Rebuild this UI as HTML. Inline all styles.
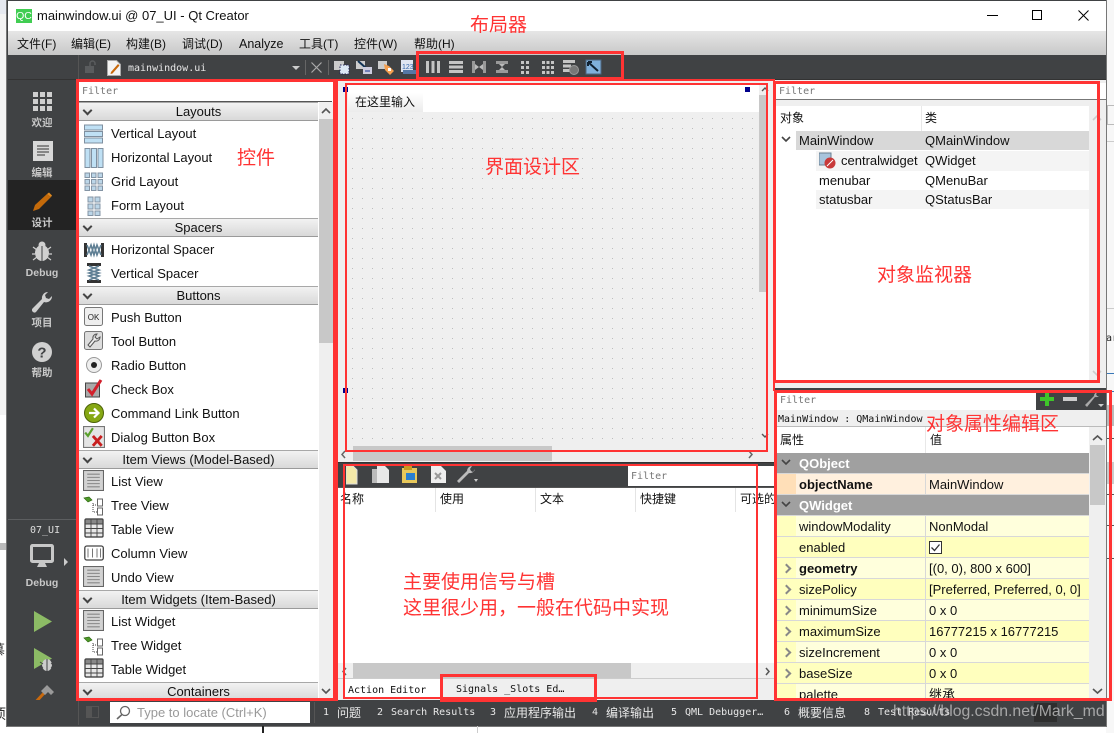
<!DOCTYPE html>
<html lang="zh"><head><meta charset="utf-8"><title>Qt Creator</title>
<style>
html,body{margin:0;padding:0;width:1114px;height:733px;overflow:hidden;background:#fff}
body{position:relative;font-family:"Liberation Sans","Noto Sans CJK SC",sans-serif;font-size:13px;color:#111}
div,span,svg{position:absolute}
span{white-space:nowrap}
.m{font-family:"DejaVu Sans Mono","Liberation Mono","Noto Sans CJK SC",monospace;font-size:10px;margin-top:2px}
.h{left:79px;width:239px;height:17px;line-height:17px;text-align:center;background:linear-gradient(#f2f2f2,#d9d9d9);border-top:1px solid #a8a8a8;border-bottom:1px solid #9a9a9a;font-size:13px}
.h:before{content:"";position:absolute;left:5px;top:4px;width:5px;height:5px;border:solid #444;border-width:0 2px 2px 0;transform:rotate(45deg)}
.i{left:111px;height:24px;line-height:24px;margin-top:1px}
.ic{left:84px;width:20px;height:20px}
.r{border:0 solid #ff3333}
.a{color:#f33;font-size:19px;line-height:24px;white-space:nowrap;font-family:"Noto Sans CJK SC",sans-serif}
.s{color:#c8c8c8;font-size:10.500px;font-weight:bold;text-align:center;left:8px;width:68px;line-height:14px;white-space:nowrap;margin-top:1px}
.p{left:777px;width:312px;height:20px;border-bottom:1px solid #d8d8d8;line-height:20px}
.p b,.p i,.p u{position:absolute;font-style:normal;text-decoration:none;white-space:nowrap;top:1px}
.p i{left:22px;font-size:13px}.p u{left:152px;font-size:13px}
.p em{position:absolute;left:0;top:0;width:19px;height:20px}
.p:after{content:"";position:absolute;left:148px;top:0;width:1px;height:20px;background:#d8d8d8}
.g{background:#a0a0a0;color:#fff;font-weight:bold}
.g:after{display:none}
.l{background:#ffffdc}.l em{background:#ffffbe}
.d{background:#ffffbe}.d em{background:#ffffbe}
.ar:before{content:"";position:absolute;left:6px;top:7px;width:5px;height:5px;border:solid #888;border-width:2px 2px 0 0;transform:rotate(45deg);z-index:1}
.tb{width:18px;height:18px;top:58px}
</style></head><body>

<svg style="display:none" width="0" height="0">
<symbol id="vl" viewBox="0 0 20 20"><g fill="#bfe0f4" stroke="#7f8f9f"><rect x=".5" y="1" width="18" height="5"/><rect x=".5" y="7.5" width="18" height="5"/><rect x=".5" y="14" width="18" height="5"/></g></symbol>
<symbol id="hl" viewBox="0 0 20 20"><g fill="#bfe0f4" stroke="#7f8f9f"><rect x="1" y=".5" width="5" height="19"/><rect x="7.5" y=".5" width="5" height="19"/><rect x="14" y=".5" width="5" height="19"/></g></symbol>
<symbol id="gl" viewBox="0 0 20 20"><g fill="#bcd6e8" stroke="#8494a4"><rect x="1" y="1" width="4.5" height="4.5"/><rect x="7.5" y="1" width="4.5" height="4.5"/><rect x="14" y="1" width="4.5" height="4.5"/><rect x="1" y="7.5" width="4.5" height="4.5"/><rect x="7.5" y="7.5" width="4.5" height="4.5"/><rect x="14" y="7.5" width="4.5" height="4.5"/><rect x="1" y="14" width="4.5" height="4.5"/><rect x="7.5" y="14" width="4.5" height="4.5"/><rect x="14" y="14" width="4.5" height="4.5"/></g></symbol>
<symbol id="fl" viewBox="0 0 20 20"><g fill="#bcd6e8" stroke="#8494a4"><rect x="4" y="1" width="5" height="5"/><rect x="11" y="1" width="5" height="5"/><rect x="4" y="8" width="5" height="5"/><rect x="11" y="8" width="5" height="5"/><rect x="4" y="15" width="5" height="4.5"/><rect x="11" y="15" width="5" height="4.5"/></g></symbol>
<symbol id="hs" viewBox="0 0 20 20"><rect x="0" y="3" width="3" height="14" fill="#333"/><rect x="17" y="3" width="3" height="14" fill="#333"/><path d="M3 5l4 10 3-10 3 10 4-10M3 15l4-10 3 10 3-10 4 10" fill="none" stroke="#5f7f94" stroke-width="1.6"/></symbol>
<symbol id="vs" viewBox="0 0 20 20"><rect x="3" y="0" width="14" height="3" fill="#333"/><rect x="3" y="17" width="14" height="3" fill="#333"/><path d="M5 3l10 4-10 3 10 3-10 4M15 3L5 7l10 3-10 3 10 4" fill="none" stroke="#5f7f94" stroke-width="1.6"/></symbol>
<symbol id="ok" viewBox="0 0 20 20"><rect x=".5" y=".5" width="18" height="18" rx="2" fill="#eee" stroke="#777"/><text x="9.5" y="13" font-size="8" font-family="Liberation Sans" text-anchor="middle" fill="#222">OK</text></symbol>
<symbol id="tool" viewBox="0 0 20 20"><rect x=".5" y=".5" width="18" height="18" rx="2" fill="#ddd" stroke="#777"/><path d="M13 3a4 4 0 0 0-4 5L4 14l2 2 5-6a4 4 0 0 0 5-4l-3 2-2-2z" fill="#eee" stroke="#555"/></symbol>
<symbol id="radio" viewBox="0 0 20 20"><circle cx="10" cy="10" r="7.5" fill="#eee" stroke="#999"/><circle cx="10" cy="10" r="3" fill="#222"/></symbol>
<symbol id="check" viewBox="0 0 20 20"><rect x="1.500" y="4" width="14" height="14" fill="#aaa" stroke="#444"/><path d="M4 10l4 5 9-14" fill="none" stroke="#d2202c" stroke-width="3"/></symbol>
<symbol id="cmd" viewBox="0 0 20 20"><circle cx="10" cy="10" r="9.500" fill="#86a814" stroke="#4c6208"/><path d="M5 10h9M10 5.500l4.500 4.500-4.500 4.500" fill="none" stroke="#fff" stroke-width="2.200"/></symbol>
<symbol id="dlg" viewBox="0 0 20 20"><rect x=".5" y=".5" width="19" height="19" fill="#e4e4e4" stroke="#777"/><path d="M2 6l2.500 3L9 2" fill="none" stroke="#5aa02c" stroke-width="2"/><path d="M9 9l8 9M17 9l-8 9" stroke="#c81e1e" stroke-width="2.600"/></symbol>
<symbol id="list" viewBox="0 0 20 20"><rect x=".5" y=".5" width="19" height="19" fill="#d2d2d2" stroke="#666"/><path d="M4 4h12M4 7h12M4 10h12M4 13h12M4 16h12" stroke="#888"/></symbol>
<symbol id="tree" viewBox="0 0 20 20"><path d="M0 2l5-1 3 3-4 2z" fill="#4f9a2a" stroke="#2f6a12" stroke-width=".7"/><path d="M9 7v9h4M9 9h4" stroke="#444" stroke-dasharray="1 1" fill="none"/><rect x="13.500" y="3" width="5" height="7" fill="#fff" stroke="#666"/><rect x="13.500" y="12" width="5" height="7" fill="#fff" stroke="#666"/></symbol>
<symbol id="table" viewBox="0 0 20 20"><rect x="1" y="1" width="18" height="18" rx="1" fill="#e8e8e8" stroke="#333" stroke-width="1.200"/><rect x="1.500" y="1.500" width="17" height="4" fill="#888"/><path d="M7 1v18M13 1v18M1 6h18M1 10.500h18M1 15h18" stroke="#444" stroke-width=".9"/></symbol>
<symbol id="col" viewBox="0 0 20 20"><rect x=".8" y="3" width="18.500" height="14" rx="2" fill="#fff" stroke="#444" stroke-width="1.300"/><path d="M4 5.500v9M8.500 5.500v9M13 5.500v9M16.500 5.500v9" stroke="#777"/></symbol>
</svg>

<!-- page behind -->
<div style="left:0;top:0;width:8px;height:415px;background:#f3f3f3"></div>
<div style="left:0;top:0;width:8px;height:14px;background:#e6e9f0"></div>
<div style="left:0;top:543px;width:8px;height:7px;background:#bbb"></div>
<span style="left:-9px;top:640px;font-size:14px;color:#333">慕</span>
<span style="left:-8px;top:704px;font-size:14px;color:#333">项</span>
<div style="left:1106px;top:0;width:8px;height:733px;background:#f7f7f7"></div>
<div style="left:1107px;top:105px;width:7px;height:18px;border:1px solid #bbb"></div>
<div style="left:1106px;top:141px;width:8px;height:1px;background:#ccc"></div>
<span class="m" style="left:1106px;top:331px;color:#222">ar</span>
<div style="left:1106px;top:308px;width:8px;height:1px;background:#ccc"></div>
<div style="left:1106px;top:373px;width:8px;height:1px;background:#3a78b8"></div>
<div style="left:1106px;top:391px;width:8px;height:1px;background:#3a78b8"></div>
<div style="left:1106px;top:405px;width:8px;height:21px;background:#bbb"></div>
<div style="left:1106px;top:438px;width:8px;height:1px;background:#555"></div>
<div style="left:1106px;top:462px;width:8px;height:22px;background:#ccc"></div>
<div style="left:1106px;top:494px;width:8px;height:1px;background:#555"></div>
<div style="left:1106px;top:525px;width:8px;height:1px;background:#555"></div>
<div style="left:1106px;top:558px;width:8px;height:1px;background:#555"></div>

<!-- window -->
<div style="left:7px;top:0;width:1099px;height:726px;background:#404244;box-shadow:0 0 0 1px #777"></div>
<div style="left:8px;top:1px;width:1098px;height:30px;background:#fff"></div>
<div style="left:16px;top:9px;width:16px;height:14px;background:#41cd52;color:#fff;font-size:10.500px;line-height:14px;text-align:center">QC</div>
<span style="left:37px;top:8px;line-height:16px;font-size:13px;color:#111">mainwindow.ui @ 07_UI - Qt Creator</span>
<div style="left:987px;top:15px;width:11px;height:1px;background:#000"></div>
<div style="left:1032px;top:10px;width:8px;height:8px;border:1px solid #000"></div>
<svg style="left:1078px;top:10px" width="11" height="11"><path d="M.5.5l10 10M10.500.5l-10 10" stroke="#000" fill="none"/></svg>

<div style="left:8px;top:31px;width:1098px;height:24px;background:linear-gradient(#e6e6e6,#c8c8c8)"></div>
<span style="left:17px;top:36px;line-height:16px;font-size:12px">文件(F)</span>
<span style="left:71px;top:36px;line-height:16px;font-size:12px">编辑(E)</span>
<span style="left:126px;top:36px;line-height:16px;font-size:12px">构建(B)</span>
<span style="left:182px;top:36px;line-height:16px;font-size:12px">调试(D)</span>
<span style="left:239px;top:36px;line-height:16px;font-size:12.500px">Analyze</span>
<span style="left:299px;top:36px;line-height:16px;font-size:12px">工具(T)</span>
<span style="left:354px;top:36px;line-height:16px;font-size:12px">控件(W)</span>
<span style="left:414px;top:36px;line-height:16px;font-size:12px">帮助(H)</span>

<!-- toolbar -->
<div style="left:78px;top:55px;width:1px;height:24px;background:#555"></div>
<div style="left:8px;top:79px;width:1098px;height:1px;background:#333"></div>
<svg style="left:84px;top:60px" width="14" height="14"><rect x="1" y="6" width="9" height="7" fill="#5a5c5e"/><path d="M6 6V3.500a2.500 2.500 0 0 1 5 0V5" fill="none" stroke="#5a5c5e" stroke-width="1.500"/></svg>
<svg style="left:107px;top:60px" width="14" height="16"><path d="M.5.5h9l4 4v11H.5z" fill="#f4f4f4" stroke="#aaa"/><path d="M4 12l7-8 1.500 1.500-7 8-2 .5z" fill="#c8680a"/></svg>
<span class="m" style="left:128px;top:60px;color:#e8e8e8;line-height:14px">mainwindow.ui</span>
<div style="left:292px;top:66px;border:4px solid transparent;border-top:4px solid #ccc;border-bottom:0;width:0;height:0"></div>
<div style="left:305px;top:60px;width:1px;height:15px;background:#666"></div>
<svg style="left:311px;top:62px" width="11" height="11"><path d="M.5.5l10 10M10.500.5l-10 10" stroke="#aaa" fill="none" stroke-width="1.200"/></svg>
<div style="left:328px;top:60px;width:1px;height:15px;background:#666"></div>
<svg class="tb" style="left:333px"><rect x="1" y="3" width="10" height="9" fill="#ccc"/><rect x="7" y="7" width="9" height="9" fill="#dce8f4" stroke="#225" stroke-dasharray="1.500 1.500"/></svg>
<svg class="tb" style="left:355px"><rect x="1" y="3" width="9" height="8" fill="#ccc"/><path d="M3 3l8 7" stroke="#135" stroke-width="2"/><rect x="8" y="9" width="9" height="7" fill="#ccd"/><path d="M10 13h5" stroke="#56a" stroke-width="1.500"/></svg>
<svg class="tb" style="left:377px"><rect x="1" y="3" width="9" height="8" fill="#ccc"/><path d="M7 6l5 2 5 5-4 4-5-5z" fill="#f5a050"/><rect x="11" y="10" width="3" height="3" fill="#fff"/></svg>
<svg class="tb" style="left:400px"><rect x="1" y="2" width="12" height="12" fill="#dfe6f2"/><text x="2" y="11" font-size="7" fill="#36a" font-family="Liberation Sans">123</text><rect x="3" y="12" width="14" height="4" fill="#5577a5"/></svg>
<svg class="tb" style="left:424px"><path d="M2 3h3v12H2zM7.500 3h3v12h-3zM13 3h3v12h-3z" fill="#c4c4c4"/></svg>
<svg class="tb" style="left:447px"><path d="M2 3h14v3H2zM2 7.500h14v3H2zM2 12h14v3H2z" fill="#c4c4c4"/></svg>
<svg class="tb" style="left:470px"><path d="M2 3h3v12H2zM13 3h3v12h-3z" fill="#999"/><path d="M5 6l4 3 4-3v6l-4-3-4 3z" fill="#bbb"/></svg>
<svg class="tb" style="left:493px"><path d="M3 3h12v3H3zM3 12h12v3H3z" fill="#999"/><path d="M6 6h6L9 9l3 3H6l3-3z" fill="#bbb"/></svg>
<svg class="tb" style="left:516px"><path d="M5 3h3v3H5zM10 3h3v3h-3zM5 8h3v3H5zM10 8h3v3h-3zM5 13h3v3H5zM10 13h3v3h-3z" fill="#c4c4c4"/></svg>
<svg class="tb" style="left:539px"><path d="M3 3h3v3H3zM7.500 3h3v3h-3zM12 3h3v3h-3zM3 8h3v3H3zM7.500 8h3v3h-3zM12 8h3v3h-3zM3 13h3v3H3zM7.500 13h3v3h-3zM12 13h3v3h-3z" fill="#c4c4c4"/></svg>
<svg class="tb" style="left:561px"><path d="M2 2h12v3H2zM2 6.500h8v3H2zM2 11h7v3H2z" fill="#c4c4c4"/><circle cx="13" cy="12" r="4.500" fill="#777" stroke="#999"/></svg>
<svg class="tb" style="left:585px"><rect x="1" y="2" width="15" height="14" fill="#7fb0dc" stroke="#4e6680"/><path d="M3 4l10 9" stroke="#123" stroke-width="2"/><path d="M3 4h4M3 4v4" stroke="#123" stroke-width="2"/></svg>

<!-- sidebar -->
<div style="left:8px;top:80px;width:68px;height:646px;background:#404244"></div>
<div style="left:8px;top:180px;width:68px;height:50px;background:#232323"></div>
<svg style="left:32px;top:91px" width="20" height="20"><path d="M1 1h5v5H1zM8 1h5v5H8zM15 1h5v5h-5zM1 8h5v5H1zM8 8h5v5H8zM15 8h5v5h-5zM1 15h5v5H1zM8 15h5v5H8zM15 15h5v5h-5z" fill="#cfcfcf"/></svg>
<div class="s" style="top:115px">欢迎</div>
<svg style="left:33px;top:141px" width="20" height="20"><rect width="20" height="20" fill="#d8d8d8"/><path d="M4 5h12M4 8h12M4 11h12M4 14h8" stroke="#333"/></svg>
<div class="s" style="top:165px">编辑</div>
<svg style="left:32px;top:192px" width="20" height="20"><path d="M1 19l2-6L15 2l4 3L7 17z" fill="#c46a0a"/><path d="M15 2l2-1.500 3 3L19 5z" fill="#e08a20"/></svg>
<div class="s" style="top:215px">设计</div>
<svg style="left:32px;top:241px" width="20" height="22"><ellipse cx="10" cy="12" rx="7" ry="8" fill="#d0d0d0"/><circle cx="10" cy="4" r="3.500" fill="#d0d0d0"/><path d="M10 4v16M1 6l4 3M19 6l-4 3M0 13h3M17 13h3M1 19l4-3M19 19l-4-3" stroke="#d0d0d0" stroke-width="1.200"/><path d="M10 5v15" stroke="#404244"/></svg>
<div class="s" style="top:265px">Debug</div>
<svg style="left:32px;top:291px" width="21" height="23"><path d="M20 5a6 6 0 0 1-8 6L4 21a2.500 2.500 0 0 1-3.500-3.500L10 8a6 6 0 0 1 6-7l-3 3 1 3 3 1z" fill="#cfcfcf"/></svg>
<div class="s" style="top:315px">项目</div>
<svg style="left:32px;top:342px" width="20" height="20"><circle cx="10" cy="10" r="10" fill="#d0d0d0"/><text x="10" y="15.500" font-size="15" font-weight="bold" font-family="Liberation Sans" text-anchor="middle" fill="#404244">?</text></svg>
<div class="s" style="top:365px">帮助</div>
<div style="left:8px;top:519px;width:68px;height:1px;background:#5c5e60"></div>
<span class="m" style="left:30px;top:522px;color:#ddd;line-height:14px">07_UI</span>
<svg style="left:30px;top:544px" width="26" height="26"><rect x="1.500" y="1.500" width="21" height="16" rx="1" fill="#404244" stroke="#c8c8c8" stroke-width="3"/><path d="M9 19h6l2 4H7z" fill="#c8c8c8"/></svg>
<div style="left:64px;top:558px;border:4px solid transparent;border-left:4px solid #ccc;border-right:0;width:0;height:0"></div>
<div class="s" style="top:575px">Debug</div>
<svg style="left:33px;top:610px" width="20" height="23"><path d="M1 1l18 10.500L1 22z" fill="#8cbb65"/></svg>
<svg style="left:33px;top:647px" width="22" height="25"><path d="M1 1l18 10.500L1 22z" fill="#8cbb65"/><ellipse cx="14" cy="18" rx="5" ry="6" fill="#ccc"/><path d="M14 12v12M7 15l3 2M21 15l-3 2M7 22l3-2M21 22l-3-2" stroke="#404244"/></svg>
<svg style="left:31px;top:684px" width="24" height="24"><path d="M2 21L14 8" stroke="#c8690e" stroke-width="3" fill="none"/><path d="M10 7l6-6 7 7-3 3-3-3-3 3z" fill="#9a9a9a"/></svg>

<!-- widget box -->
<div style="left:79px;top:81px;width:254px;height:620px;background:#fff"></div>
<div style="left:79px;top:81px;width:253px;height:20px;background:#fff;border-bottom:1px solid #555"></div>
<span class="m" style="left:82px;top:83px;color:#777;line-height:14px">Filter</span>
<div style="left:319px;top:102px;width:14px;height:599px;background:#efefef"></div>
<div style="left:319px;top:119px;width:14px;height:224px;background:#c8c8c8"></div>
<svg style="left:321px;top:107px" width="10" height="7"><path d="M1 6l4-4 4 4" fill="none" stroke="#555" stroke-width="1.600"/></svg>
<svg style="left:321px;top:688px" width="10" height="7"><path d="M1 1l4 4 4-4" fill="none" stroke="#555" stroke-width="1.600"/></svg>

<div class="h" style="top:102px">Layouts</div>
<svg class="ic" style="top:124px"><use href="#vl"/></svg><span class="i" style="top:121px">Vertical Layout</span>
<svg class="ic" style="top:148px"><use href="#hl"/></svg><span class="i" style="top:145px">Horizontal Layout</span>
<svg class="ic" style="top:172px"><use href="#gl"/></svg><span class="i" style="top:169px">Grid Layout</span>
<svg class="ic" style="top:196px"><use href="#fl"/></svg><span class="i" style="top:193px">Form Layout</span>
<div class="h" style="top:218px">Spacers</div>
<svg class="ic" style="top:240px"><use href="#hs"/></svg><span class="i" style="top:237px">Horizontal Spacer</span>
<svg class="ic" style="top:263px"><use href="#vs"/></svg><span class="i" style="top:261px">Vertical Spacer</span>
<div class="h" style="top:286px">Buttons</div>
<svg class="ic" style="top:307px"><use href="#ok"/></svg><span class="i" style="top:305px">Push Button</span>
<svg class="ic" style="top:331px"><use href="#tool"/></svg><span class="i" style="top:329px">Tool Button</span>
<svg class="ic" style="top:355px"><use href="#radio"/></svg><span class="i" style="top:353px">Radio Button</span>
<svg class="ic" style="top:379px"><use href="#check"/></svg><span class="i" style="top:377px">Check Box</span>
<svg class="ic" style="top:403px"><use href="#cmd"/></svg><span class="i" style="top:401px">Command Link Button</span>
<svg class="ic" style="left:83px;top:426px;width:22px;height:22px"><use href="#dlg"/></svg><span class="i" style="top:425px">Dialog Button Box</span>
<div class="h" style="top:450px">Item Views (Model-Based)</div>
<svg class="ic" style="left:83px;top:470px;width:21px;height:21px"><use href="#list"/></svg><span class="i" style="top:469px">List View</span>
<svg class="ic" style="left:83px;top:496px;width:22px;height:20px"><use href="#tree"/></svg><span class="i" style="top:493px">Tree View</span>
<svg class="ic" style="top:518px"><use href="#table"/></svg><span class="i" style="top:517px">Table View</span>
<svg class="ic" style="top:543px"><use href="#col"/></svg><span class="i" style="top:541px">Column View</span>
<svg class="ic" style="left:83px;top:566px;width:21px;height:21px"><use href="#list"/></svg><span class="i" style="top:565px">Undo View</span>
<div class="h" style="top:590px">Item Widgets (Item-Based)</div>
<svg class="ic" style="left:83px;top:610px;width:21px;height:21px"><use href="#list"/></svg><span class="i" style="top:609px">List Widget</span>
<svg class="ic" style="left:83px;top:636px;width:22px;height:20px"><use href="#tree"/></svg><span class="i" style="top:633px">Tree Widget</span>
<svg class="ic" style="top:658px"><use href="#table"/></svg><span class="i" style="top:657px">Table Widget</span>
<div class="h" style="top:682px;height:17px">Containers</div>

<!-- design area -->
<div style="left:335px;top:80px;width:440px;height:383px;background:#efefef"></div>
<div style="left:348px;top:85px;width:411px;height:27px;background:#fff"></div>
<div style="left:348px;top:93px;width:75px;height:19px;background:linear-gradient(#fff,#ececec)"></div>
<span style="left:355px;top:94px;font-size:12px;line-height:17px">在这里输入</span>
<svg style="left:348px;top:112px" width="411" height="335"><defs><pattern id="dot" width="10" height="10" patternUnits="userSpaceOnUse"><rect x="4" y="6" width="1" height="1" fill="#bcbcbc"/></pattern></defs><rect width="411" height="335" fill="#efefef"/><rect width="411" height="335" fill="url(#dot)"/></svg>
<div style="left:745px;top:87px;width:5px;height:5px;background:#00008b"></div>
<div style="left:343px;top:87px;width:5px;height:5px;background:#00008b"></div>
<div style="left:343px;top:388px;width:5px;height:5px;background:#00008b"></div>
<div style="left:759px;top:95px;width:9px;height:197px;background:#c8c8c8"></div>
<div style="left:353px;top:446px;width:199px;height:15px;background:#c8c8c8"></div>
<svg style="left:761px;top:86px" width="8" height="6"><path d="M1 5l3-3 3 3" fill="none" stroke="#555" stroke-width="1.400"/></svg>
<svg style="left:761px;top:433px" width="8" height="6"><path d="M1 1l3 3 3-3" fill="none" stroke="#555" stroke-width="1.400"/></svg>
<svg style="left:340px;top:450px" width="7" height="9"><path d="M5 1L2 4.500 5 8" fill="none" stroke="#666" stroke-width="1.500"/></svg>
<svg style="left:747px;top:450px" width="7" height="9"><path d="M2 1l3 3.500L2 8" fill="none" stroke="#666" stroke-width="1.500"/></svg>
<div style="left:335px;top:462px;width:440px;height:1px;background:#333"></div>

<!-- action editor -->
<div style="left:335px;top:463px;width:440px;height:24px;background:#404244"></div>
<svg style="left:346px;top:465px" width="12" height="20"><path d="M0 1h7l4 4v14H0z" fill="#f4e9a8" stroke="#ddd"/></svg>
<svg style="left:371px;top:465px" width="20" height="20"><path d="M1 4h10v14H1z" fill="#bbb"/><path d="M6 1h8l4 4v13H6z" fill="#e8e8e8"/></svg>
<svg style="left:401px;top:465px" width="18" height="20"><path d="M1 3h15v15H1z" fill="#e8c85a"/><path d="M3 1h8v4H3z" fill="#c89a20"/><rect x="5" y="8" width="9" height="7" fill="#2a80d0"/></svg>
<svg style="left:430px;top:465px" width="17" height="19"><path d="M1 1h10l5 5v12H1z" fill="#eee"/><path d="M5 8l6 6M11 8l-6 6" stroke="#999" stroke-width="2"/></svg>
<svg style="left:456px;top:465px" width="22" height="20"><path d="M19 4a5 5 0 0 1-6 4L3 18 1 16 11 6a5 5 0 0 1 5-5l-2 3 1 2 2 1z" fill="#bbb"/><path d="M18 14h4l-2 3z" fill="#ccc"/></svg>
<div style="left:628px;top:466px;width:147px;height:20px;background:#fff"></div>
<span class="m" style="left:631px;top:468px;color:#777;line-height:14px">Filter</span>
<div style="left:335px;top:487px;width:440px;height:176px;background:#fff;border-top:1px solid #555;box-sizing:border-box"></div>
<span style="left:340px;top:491px;font-size:12px;line-height:17px">名称</span>
<span style="left:440px;top:491px;font-size:12px;line-height:17px">使用</span>
<span style="left:540px;top:491px;font-size:12px;line-height:17px">文本</span>
<span style="left:640px;top:491px;font-size:12px;line-height:17px">快捷键</span>
<span style="left:740px;top:491px;font-size:12px;line-height:17px;width:35px;overflow:hidden">可选的</span>
<div style="left:435px;top:488px;width:1px;height:24px;background:#e4e4e4"></div>
<div style="left:535px;top:488px;width:1px;height:24px;background:#e4e4e4"></div>
<div style="left:635px;top:488px;width:1px;height:24px;background:#e4e4e4"></div>
<div style="left:735px;top:488px;width:1px;height:24px;background:#e4e4e4"></div>
<div style="left:335px;top:663px;width:440px;height:37px;background:#efefef"></div>
<div style="left:353px;top:663px;width:278px;height:15px;background:#c8c8c8"></div>
<svg style="left:341px;top:667px" width="7" height="9"><path d="M5 1L2 4.500 5 8" fill="none" stroke="#666" stroke-width="1.500"/></svg>
<svg style="left:764px;top:667px" width="7" height="9"><path d="M2 1l3 3.500L2 8" fill="none" stroke="#555" stroke-width="1.500"/></svg>
<div style="left:335px;top:678px;width:440px;height:1px;background:#ccc"></div>
<div style="left:345px;top:679px;width:95px;height:20px;background:#fff"></div>
<span class="m" style="left:348px;top:682px;line-height:13px;color:#111">Action Editor</span>
<span class="m" style="left:456px;top:681px;line-height:13px;color:#111">Signals _Slots Ed…</span>

<!-- object inspector -->
<div style="left:775px;top:80px;width:331px;height:308px;background:#efefef"></div>
<div style="left:776px;top:83px;width:330px;height:16px;background:#fff;border-bottom:1px solid #777"></div>
<span class="m" style="left:779px;top:83px;color:#777;line-height:14px">Filter</span>
<div style="left:776px;top:106px;width:313px;height:275px;background:#fff"></div>
<div style="left:921px;top:106px;width:1px;height:25px;background:#e8e8e8"></div>
<span style="left:780px;top:110px;font-size:12px;line-height:17px">对象</span>
<span style="left:925px;top:110px;font-size:12px;line-height:17px">类</span>
<div style="left:796px;top:131px;width:293px;height:19px;background:#d8d8d8"></div>
<svg style="left:781px;top:136px" width="10" height="8"><path d="M1 1l4 4 4-4" fill="none" stroke="#444" stroke-width="1.600"/></svg>
<span style="left:799px;top:132px;line-height:18px">MainWindow</span><span style="left:925px;top:132px;line-height:18px">QMainWindow</span>
<div style="left:816px;top:151px;width:273px;height:20px;background:#f4f4f4"></div>
<svg style="left:819px;top:152px" width="17" height="17"><rect x="0" y="1" width="12" height="12" fill="#a8c4dc" stroke="#6a7f92"/><circle cx="11" cy="11" r="5.500" fill="#c83a3a"/><path d="M8 14l6-6" stroke="#fff"/></svg>
<span style="left:841px;top:152px;line-height:18px">centralwidget</span><span style="left:925px;top:152px;line-height:18px">QWidget</span>
<span style="left:819px;top:172px;line-height:18px">menubar</span><span style="left:925px;top:172px;line-height:18px">QMenuBar</span>
<div style="left:816px;top:190px;width:273px;height:19px;background:#f4f4f4"></div>
<span style="left:819px;top:191px;line-height:18px">statusbar</span><span style="left:925px;top:191px;line-height:18px">QStatusBar</span>
<svg style="left:1092px;top:114px" width="10" height="7"><path d="M1 6l4-4 4 4" fill="none" stroke="#ccc" stroke-width="1.600"/></svg>
<svg style="left:1092px;top:370px" width="10" height="7"><path d="M1 1l4 4 4-4" fill="none" stroke="#ccc" stroke-width="1.600"/></svg>

<!-- property editor -->
<div style="left:775px;top:388px;width:331px;height:4px;background:#404244"></div>
<div style="left:775px;top:392px;width:331px;height:308px;background:#efefef"></div>
<div style="left:777px;top:392px;width:259px;height:18px;background:#fff"></div>
<div style="left:1036px;top:390px;width:70px;height:20px;background:#404244"></div>
<span class="m" style="left:780px;top:392px;color:#777;line-height:14px">Filter</span>
<svg style="left:1039px;top:391px" width="18" height="18"><path d="M6 1h4v5h5v4h-5v5H6v-5H1V6h5z" fill="#3fc62a"/></svg>
<div style="left:1063px;top:397px;width:14px;height:4px;background:#ccc"></div>
<svg style="left:1085px;top:391px" width="20" height="18"><path d="M15 3a4 4 0 0 1-5 3L2 16 0 14 9 5a4 4 0 0 1 4-4l-2 2 1 2 2 0z" fill="#aaa"/><path d="M13 13h6l-3 3z" fill="#ccc"/></svg>
<div style="left:777px;top:410px;width:329px;height:16px;border-bottom:1px solid #bbb"></div>
<span class="m" style="left:778px;top:411px;line-height:13px;color:#111">MainWindow : QMainWindow</span>
<div style="left:777px;top:427px;width:312px;height:26px;background:#fff"></div>
<div style="left:925px;top:427px;width:1px;height:26px;background:#e8e8e8"></div>
<span style="left:780px;top:432px;font-size:12px;line-height:17px">属性</span>
<span style="left:930px;top:432px;font-size:12px;line-height:17px">值</span>

<div class="p g" style="top:453px"><i>QObject</i></div>
<svg style="left:781px;top:459px" width="10" height="8"><path d="M1 1l4 4 4-4" fill="none" stroke="#444" stroke-width="1.600"/></svg>
<div class="p" style="top:474px;background:#fff0de"><em style="background:#ffdfb8"></em><i style="font-weight:bold">objectName</i><u>MainWindow</u></div>
<div class="p g" style="top:495px"><i>QWidget</i></div>
<svg style="left:781px;top:501px" width="10" height="8"><path d="M1 1l4 4 4-4" fill="none" stroke="#444" stroke-width="1.600"/></svg>
<div class="p l" style="top:516px"><em></em><i>windowModality</i><u>NonModal</u></div>
<div class="p d" style="top:537px"><em></em><i>enabled</i></div>
<svg style="left:929px;top:541px" width="13" height="13"><rect x=".5" y=".5" width="12" height="12" fill="#fff" stroke="#333"/><path d="M2.500 6.500l3 3 5-6" fill="none" stroke="#333" stroke-width="1.300"/></svg>
<div class="p l ar" style="top:558px"><em></em><i style="font-weight:bold">geometry</i><u>[(0, 0), 800 x 600]</u></div>
<div class="p d ar" style="top:579px"><em></em><i>sizePolicy</i><u>[Preferred, Preferred, 0, 0]</u></div>
<div class="p l ar" style="top:600px"><em></em><i>minimumSize</i><u>0 x 0</u></div>
<div class="p d ar" style="top:621px"><em></em><i>maximumSize</i><u>16777215 x 16777215</u></div>
<div class="p l ar" style="top:642px"><em></em><i>sizeIncrement</i><u>0 x 0</u></div>
<div class="p d ar" style="top:663px"><em></em><i>baseSize</i><u>0 x 0</u></div>
<div class="p l" style="top:684px;height:16px;overflow:hidden;border:0"><em></em><i>palette</i><u>继承</u></div>
<div style="left:1090px;top:445px;width:15px;height:60px;background:#c8c8c8"></div>
<svg style="left:1092px;top:434px" width="11" height="7"><path d="M1 6l4.500-4 4.500 4" fill="none" stroke="#555" stroke-width="1.600"/></svg>
<svg style="left:1092px;top:688px" width="11" height="7"><path d="M1 1l4.500 4 4.500-4" fill="none" stroke="#555" stroke-width="1.600"/></svg>

<!-- bottom bar -->
<div style="left:8px;top:700px;width:1098px;height:25px;background:#404244"></div>
<div style="left:78px;top:701px;width:1px;height:24px;background:#555"></div>
<div style="left:86px;top:706px;width:5px;height:12px;background:#555"></div>
<div style="left:91px;top:706px;width:6px;height:10px;border:1px solid #555"></div>
<div style="left:110px;top:702px;width:200px;height:21px;background:#fff"></div>
<svg style="left:116px;top:705px" width="16" height="16"><circle cx="9" cy="6" r="4.500" fill="none" stroke="#666" stroke-width="1.300"/><path d="M6 9.500L1 14" stroke="#666" stroke-width="1.600"/></svg>
<span style="left:137px;top:704px;font-size:13px;line-height:17px;color:#999">Type to locate (Ctrl+K)</span>
<div style="left:314px;top:702px;width:1px;height:21px;background:#555"></div>
<span class="m" style="left:323px;top:704px;color:#e8e8e8;line-height:14px">1</span>
<span style="left:337px;top:705px;font-size:12px;line-height:16px;color:#e8e8e8">问题</span>
<span class="m" style="left:377px;top:704px;color:#e8e8e8;line-height:14px">2</span>
<span class="m" style="left:391px;top:704px;color:#e8e8e8;line-height:14px">Search Results</span>
<span class="m" style="left:490px;top:704px;color:#e8e8e8;line-height:14px">3</span>
<span style="left:504px;top:705px;font-size:12px;line-height:16px;color:#e8e8e8">应用程序输出</span>
<span class="m" style="left:592px;top:704px;color:#e8e8e8;line-height:14px">4</span>
<span style="left:606px;top:705px;font-size:12px;line-height:16px;color:#e8e8e8">编译输出</span>
<span class="m" style="left:671px;top:704px;color:#e8e8e8;line-height:14px">5</span>
<span class="m" style="left:685px;top:704px;color:#e8e8e8;line-height:14px">QML Debugger…</span>
<span class="m" style="left:784px;top:704px;color:#e8e8e8;line-height:14px">6</span>
<span style="left:798px;top:705px;font-size:12px;line-height:16px;color:#e8e8e8">概要信息</span>
<span class="m" style="left:864px;top:704px;color:#e8e8e8;line-height:14px">8</span>
<span class="m" style="left:878px;top:704px;color:#e8e8e8;line-height:14px">Test Results</span>
<div style="left:1034px;top:703px;width:23px;height:19px;background:#2e2e2e"></div>
<span style="left:893px;top:702px;font-size:15.800px;line-height:20px;color:rgba(205,205,205,.72)">https://blog.csdn.net/Mark_md</span>
<div style="left:262px;top:726px;width:2px;height:7px;background:#222"></div>
<div style="left:477px;top:726px;width:1px;height:7px;background:#ccc"></div>

<!-- red annotation boxes -->
<div class="r" style="left:76px;top:79px;width:256px;height:616px;border-width:3px"></div>
<div class="r" style="left:333px;top:79px;width:440px;height:0;border-top-width:2px"></div>
<div class="r" style="left:333px;top:79px;width:0;height:621px;border-left-width:2px"></div>
<div class="r" style="left:773px;top:79px;width:0;height:312px;border-left-width:2px"></div>
<div class="r" style="left:345px;top:83px;width:419px;height:365px;border-width:2px"></div>
<div class="r" style="left:416px;top:51px;width:202px;height:23px;border-width:3px"></div>
<div class="r" style="left:343px;top:464px;width:411px;height:231px;border-width:2px"></div>
<div class="r" style="left:440px;top:674px;width:151px;height:22px;border-width:3px"></div>
<div class="r" style="left:773px;top:81px;width:321px;height:296px;border-width:3px"></div>
<div class="r" style="left:774px;top:390px;width:332px;height:305px;border-width:3px"></div>

<div class="a" style="position:absolute;left:470px;top:12px">布局器</div>
<div class="a" style="position:absolute;left:237px;top:145px">控件</div>
<div class="a" style="position:absolute;left:485px;top:154px">界面设计区</div>
<div class="a" style="position:absolute;left:877px;top:262px">对象监视器</div>
<div class="a" style="position:absolute;left:926px;top:411px">对象属性编辑区</div>
<div class="a" style="position:absolute;left:403px;top:569px">主要使用信号与槽</div>
<div class="a" style="position:absolute;left:403px;top:595px">这里很少用，一般在代码中实现</div>
</body></html>
